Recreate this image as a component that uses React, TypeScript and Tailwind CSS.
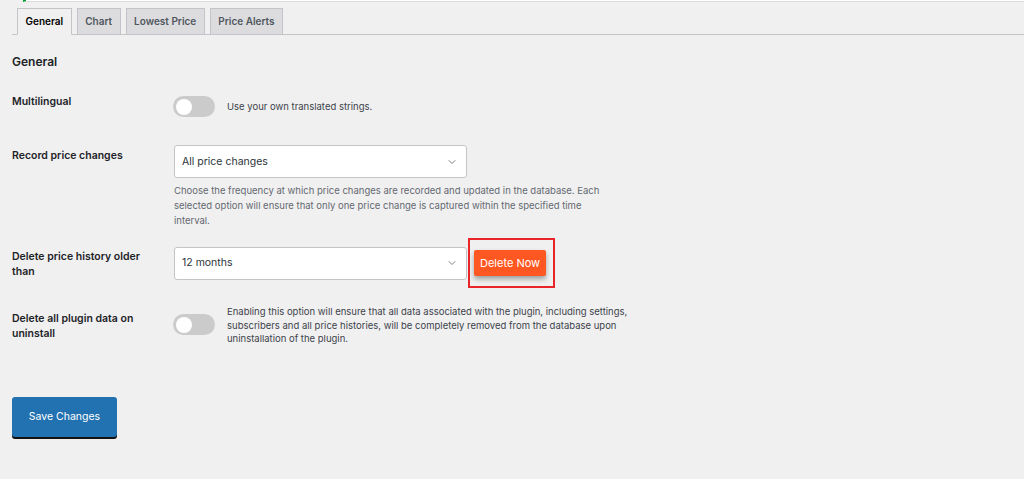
import { ChevronDown } from "lucide-react";

const FONT = { fontFamily: "Inter, 'Noto Sans', sans-serif" };

const TABS = ["General", "Chart", "Lowest Price", "Price Alerts"];

function Toggle() {
  return (
    <div className="w-[42px] h-[21px] rounded-full bg-[#cbcbcb] flex items-center px-[3px] shrink-0">
      <div className="w-[16px] h-[16px] rounded-full bg-white" />
    </div>
  );
}

function Select({ value }: { value: string }) {
  return (
    <div className="w-[293px] h-[33px] bg-white border border-[#c3c4c7] rounded-[3px] flex items-center justify-between pl-[7px] pr-[8px] shrink-0">
      <span className="text-[10.5px] text-[#2c3338]">{value}</span>
      <ChevronDown size={12} strokeWidth={1.5} className="text-[#50575e]" />
    </div>
  );
}

function Label({ children }: { children: React.ReactNode }) {
  return (
    <div className="w-[162px] shrink-0 pr-[20px] text-[10.5px] font-semibold leading-[15px] text-[#1d2327]">
      {children}
    </div>
  );
}

export default function App() {
  return (
    <div className="w-[1024px] h-[479px] bg-[#f0f0f1] overflow-hidden" style={FONT}>
      <div className="ml-[23px] h-[2px] bg-white border-b border-[#dcdcde] border-l-[3px] border-l-[#00a32a]" />
      <div className="ml-[12px] mt-[7px] flex items-end gap-[5px] pl-[5px] border-b border-[#c3c4c7] h-[26px]">
        {TABS.map((t, i) => (
          <div
            key={t}
            className={
              i === 0
                ? "h-[27px] -mb-px px-[7.5px] flex items-center bg-[#f0f0f1] border border-[#c3c4c7] border-b-[#f0f0f1] text-[10px] font-semibold text-[#000]"
                : "h-[26px] px-[7.5px] flex items-center bg-[#dcdcde] border border-[#c3c4c7] border-b-0 text-[10px] font-semibold text-[#50575e]"
            }
          >
            {t}
          </div>
        ))}
      </div>

      <div className="pl-[12px]">
        <h2 className="mt-[19px] text-[12px] font-semibold text-[#1d2327] leading-[16px]">General</h2>

        <div className="mt-[26px] flex items-start h-[21px]">
          <Label>
            <div className="-mt-[2px]">Multilingual</div>
          </Label>
          <div className="flex items-center gap-[12px] -ml-px">
            <Toggle />
            <span className="text-[9.5px] text-[#3c434a] mt-[1px]">Use your own translated strings.</span>
          </div>
        </div>

        <div className="mt-[28px] flex">
          <Label>
            <div className="mt-[3px]">Record price changes</div>
          </Label>
          <div>
            <Select value="All price changes" />
            <p className="mt-[5px] w-[440px] text-[9.5px] leading-[15px] text-[#646970]">
              Choose the frequency at which price changes are recorded and updated in the database. Each selected option
              will ensure that only one price change is captured within the specified time interval.
            </p>
          </div>
        </div>

        <div className="mt-[10px] flex items-start">
          <Label>
            <div className="mt-[11px] w-[140px]">Delete price history older than</div>
          </Label>
          <div className="flex items-center">
            <Select value="12 months" />
            <div className="ml-[1px] flex items-center justify-start w-[87px] h-[50px] border-2 border-[#e8262a]">
              <div className="ml-[4px] bg-[#ff5722] text-white text-[11px] px-[6px] h-[26px] flex items-center rounded-[2px] shadow-[0_3px_5px_rgba(0,0,0,0.35)]">
                Delete Now
              </div>
            </div>
          </div>
        </div>

        <div className="mt-[17px] flex">
          <Label>
            <div className="mt-[6px] w-[140px]">Delete all plugin data on uninstall</div>
          </Label>
          <div className="flex items-start gap-[12px] -ml-px">
            <div className="mt-[9px]">
              <Toggle />
            </div>
            <p className="w-[410px] text-[9.5px] leading-[13.5px] text-[#3c434a]">
              Enabling this option will ensure that all data associated with the plugin, including settings, subscribers and
              all price histories, will be completely removed from the database upon uninstallation of the plugin.
            </p>
          </div>
        </div>

        <button className="mt-[51px] w-[105px] h-[40px] bg-[#2271b1] text-white text-[10.5px] font-normal rounded-[3px] shadow-[0_2px_0_#111]">
          Save Changes
        </button>
      </div>
    </div>
  );
}
